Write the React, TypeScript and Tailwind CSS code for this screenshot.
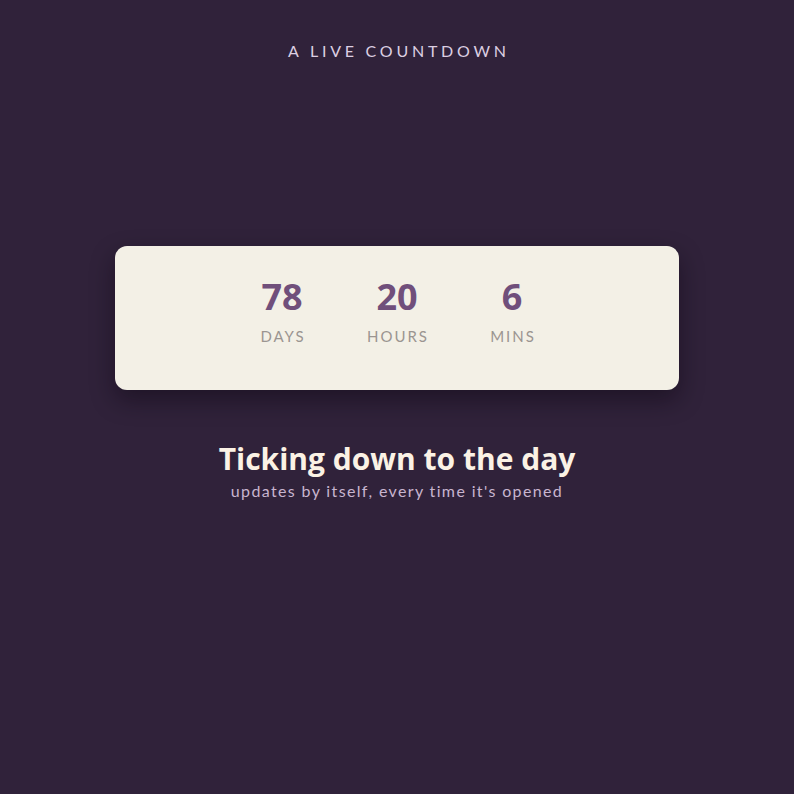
const units = [
  { value: 78, label: "Days" },
  { value: 20, label: "Hours" },
  { value: 6, label: "Mins" },
];

export default function App() {
  return (
    <div className="min-h-screen bg-[#30223a] flex flex-col items-center font-['Lato','Open_Sans',sans-serif]">
      <p className="mt-[41px] text-[16px] leading-5 tracking-[0.235em] text-[#dccfe2] uppercase pl-[0.235em]">
        A live countdown
      </p>

      {/* countdown card */}
      <div className="mt-[185px] w-[564px] h-[144px] rounded-xl bg-[#f3f0e6] shadow-[0_10px_24px_rgba(10,4,16,0.45)] flex justify-center pt-[29px]">
        {units.map((u) => (
          <div key={u.label} className="w-[115px] flex flex-col items-center">
            <span className="text-[36px] leading-[44px] font-bold text-[#704f7b] font-['Open_Sans',sans-serif]">
              {u.value}
            </span>
            <span className="mt-[7px] text-[15px] leading-5 tracking-[0.13em] uppercase text-[#9b9591] pl-[0.13em]">
              {u.label}
            </span>
          </div>
        ))}
      </div>

      <h1 className="mt-[54px] text-[30px] leading-[30px] font-bold text-[#fbf2e5] font-['Open_Sans',sans-serif]">
        Ticking down to the day
      </h1>
      <p className="mt-[8px] text-[16px] leading-[18px] tracking-[0.085em] text-[#c8b5cf]">
        updates by itself, every time it's opened
      </p>
    </div>
  );
}
